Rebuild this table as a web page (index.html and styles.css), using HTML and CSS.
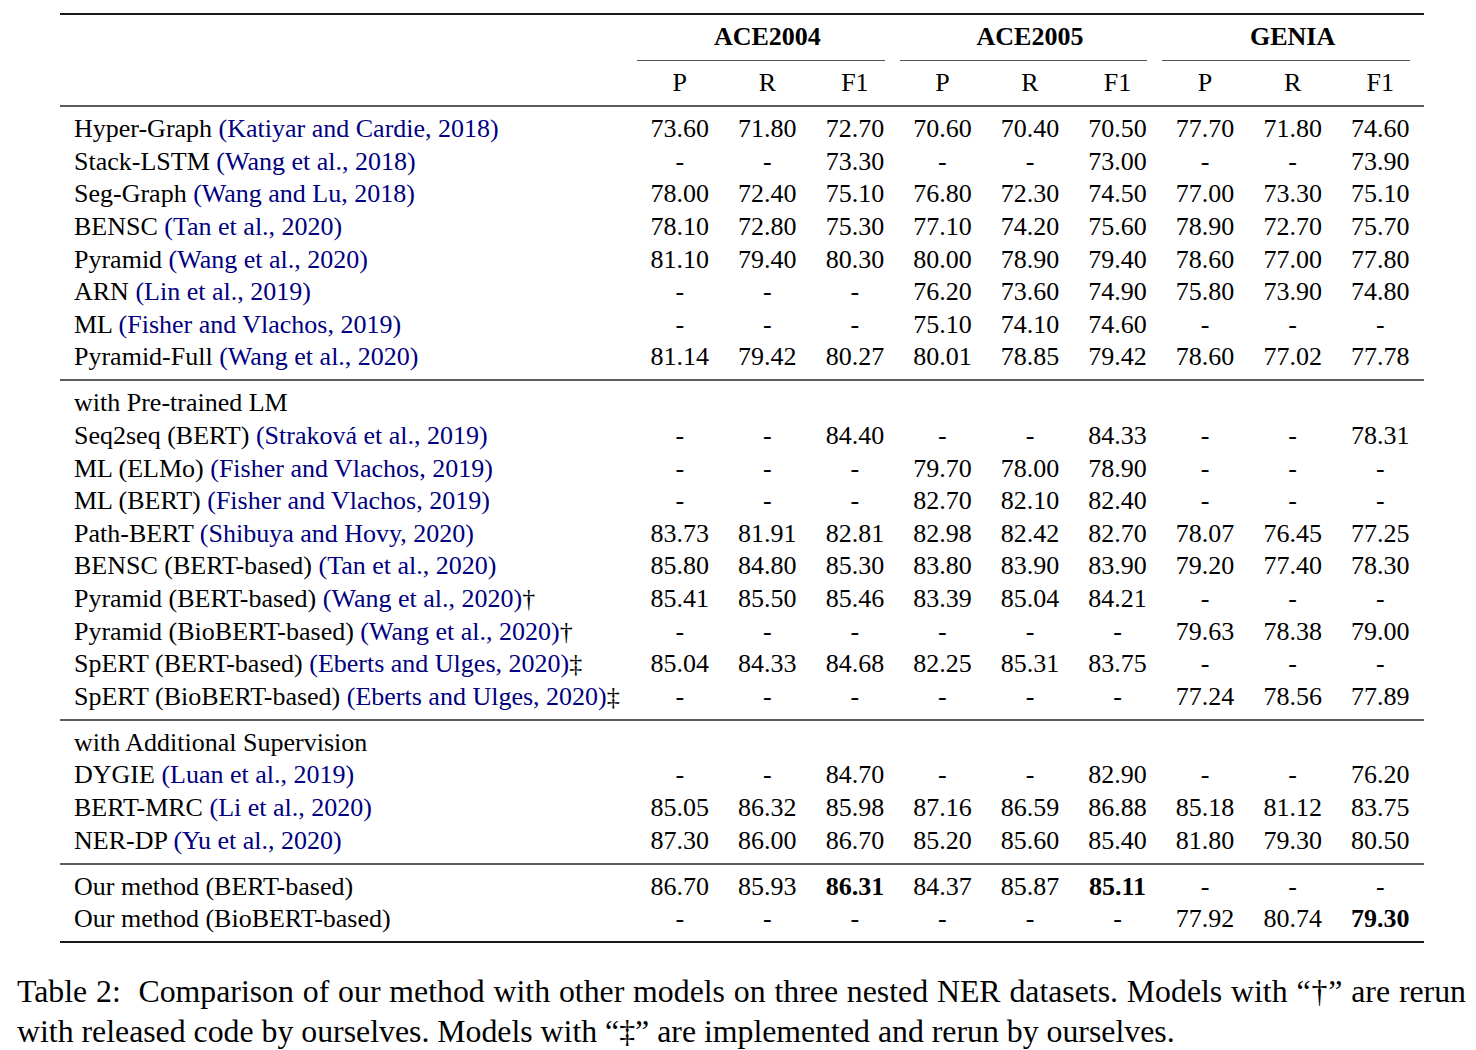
FILE: index.html
```html
<!DOCTYPE html>
<html lang="en">
<head>
<meta charset="utf-8">
<title>Table 2</title>
<link rel="stylesheet" href="styles.css">
</head>
<body>
<div class="page">
  <div class="tbl">
    <div class="head">
      <div class="row hrow1">
        <div class="lab"></div>
        <div class="grp"><span class="grp-t">ACE2004</span><span class="cmid"></span></div>
        <div class="grp"><span class="grp-t">ACE2005</span><span class="cmid"></span></div>
        <div class="grp"><span class="grp-t">GENIA</span><span class="cmid"></span></div>
      </div>
      <div class="row hrow2">
        <div class="lab"></div>
        <div class="c">P</div><div class="c">R</div><div class="c">F1</div>
        <div class="c">P</div><div class="c">R</div><div class="c">F1</div>
        <div class="c">P</div><div class="c">R</div><div class="c">F1</div>
      </div>
    </div>

    <div class="sec">
      <div class="row"><div class="lab">Hyper-Graph <span class="cite">(Katiyar and Cardie, 2018)</span></div>
        <div class="c">73.60</div><div class="c">71.80</div><div class="c">72.70</div><div class="c">70.60</div><div class="c">70.40</div><div class="c">70.50</div><div class="c">77.70</div><div class="c">71.80</div><div class="c">74.60</div></div>
      <div class="row"><div class="lab">Stack-LSTM <span class="cite">(Wang et al., 2018)</span></div>
        <div class="c">-</div><div class="c">-</div><div class="c">73.30</div><div class="c">-</div><div class="c">-</div><div class="c">73.00</div><div class="c">-</div><div class="c">-</div><div class="c">73.90</div></div>
      <div class="row"><div class="lab">Seg-Graph <span class="cite">(Wang and Lu, 2018)</span></div>
        <div class="c">78.00</div><div class="c">72.40</div><div class="c">75.10</div><div class="c">76.80</div><div class="c">72.30</div><div class="c">74.50</div><div class="c">77.00</div><div class="c">73.30</div><div class="c">75.10</div></div>
      <div class="row"><div class="lab">BENSC <span class="cite">(Tan et al., 2020)</span></div>
        <div class="c">78.10</div><div class="c">72.80</div><div class="c">75.30</div><div class="c">77.10</div><div class="c">74.20</div><div class="c">75.60</div><div class="c">78.90</div><div class="c">72.70</div><div class="c">75.70</div></div>
      <div class="row"><div class="lab">Pyramid <span class="cite">(Wang et al., 2020)</span></div>
        <div class="c">81.10</div><div class="c">79.40</div><div class="c">80.30</div><div class="c">80.00</div><div class="c">78.90</div><div class="c">79.40</div><div class="c">78.60</div><div class="c">77.00</div><div class="c">77.80</div></div>
      <div class="row"><div class="lab">ARN <span class="cite">(Lin et al., 2019)</span></div>
        <div class="c">-</div><div class="c">-</div><div class="c">-</div><div class="c">76.20</div><div class="c">73.60</div><div class="c">74.90</div><div class="c">75.80</div><div class="c">73.90</div><div class="c">74.80</div></div>
      <div class="row"><div class="lab">ML <span class="cite">(Fisher and Vlachos, 2019)</span></div>
        <div class="c">-</div><div class="c">-</div><div class="c">-</div><div class="c">75.10</div><div class="c">74.10</div><div class="c">74.60</div><div class="c">-</div><div class="c">-</div><div class="c">-</div></div>
      <div class="row"><div class="lab">Pyramid-Full <span class="cite">(Wang et al., 2020)</span></div>
        <div class="c">81.14</div><div class="c">79.42</div><div class="c">80.27</div><div class="c">80.01</div><div class="c">78.85</div><div class="c">79.42</div><div class="c">78.60</div><div class="c">77.02</div><div class="c">77.78</div></div>
    </div>

    <div class="sec">
      <div class="row"><div class="lab">with Pre-trained LM</div></div>
      <div class="row"><div class="lab">Seq2seq (BERT) <span class="cite">(Straková et al., 2019)</span></div>
        <div class="c">-</div><div class="c">-</div><div class="c">84.40</div><div class="c">-</div><div class="c">-</div><div class="c">84.33</div><div class="c">-</div><div class="c">-</div><div class="c">78.31</div></div>
      <div class="row"><div class="lab">ML (ELMo) <span class="cite">(Fisher and Vlachos, 2019)</span></div>
        <div class="c">-</div><div class="c">-</div><div class="c">-</div><div class="c">79.70</div><div class="c">78.00</div><div class="c">78.90</div><div class="c">-</div><div class="c">-</div><div class="c">-</div></div>
      <div class="row"><div class="lab">ML (BERT) <span class="cite">(Fisher and Vlachos, 2019)</span></div>
        <div class="c">-</div><div class="c">-</div><div class="c">-</div><div class="c">82.70</div><div class="c">82.10</div><div class="c">82.40</div><div class="c">-</div><div class="c">-</div><div class="c">-</div></div>
      <div class="row"><div class="lab">Path-BERT <span class="cite">(Shibuya and Hovy, 2020)</span></div>
        <div class="c">83.73</div><div class="c">81.91</div><div class="c">82.81</div><div class="c">82.98</div><div class="c">82.42</div><div class="c">82.70</div><div class="c">78.07</div><div class="c">76.45</div><div class="c">77.25</div></div>
      <div class="row"><div class="lab">BENSC (BERT-based) <span class="cite">(Tan et al., 2020)</span></div>
        <div class="c">85.80</div><div class="c">84.80</div><div class="c">85.30</div><div class="c">83.80</div><div class="c">83.90</div><div class="c">83.90</div><div class="c">79.20</div><div class="c">77.40</div><div class="c">78.30</div></div>
      <div class="row"><div class="lab">Pyramid (BERT-based) <span class="cite">(Wang et al., 2020)</span>†</div>
        <div class="c">85.41</div><div class="c">85.50</div><div class="c">85.46</div><div class="c">83.39</div><div class="c">85.04</div><div class="c">84.21</div><div class="c">-</div><div class="c">-</div><div class="c">-</div></div>
      <div class="row"><div class="lab">Pyramid (BioBERT-based) <span class="cite">(Wang et al., 2020)</span>†</div>
        <div class="c">-</div><div class="c">-</div><div class="c">-</div><div class="c">-</div><div class="c">-</div><div class="c">-</div><div class="c">79.63</div><div class="c">78.38</div><div class="c">79.00</div></div>
      <div class="row"><div class="lab">SpERT (BERT-based) <span class="cite">(Eberts and Ulges, 2020)</span>‡</div>
        <div class="c">85.04</div><div class="c">84.33</div><div class="c">84.68</div><div class="c">82.25</div><div class="c">85.31</div><div class="c">83.75</div><div class="c">-</div><div class="c">-</div><div class="c">-</div></div>
      <div class="row"><div class="lab">SpERT (BioBERT-based) <span class="cite">(Eberts and Ulges, 2020)</span>‡</div>
        <div class="c">-</div><div class="c">-</div><div class="c">-</div><div class="c">-</div><div class="c">-</div><div class="c">-</div><div class="c">77.24</div><div class="c">78.56</div><div class="c">77.89</div></div>
    </div>

    <div class="sec">
      <div class="row"><div class="lab">with Additional Supervision</div></div>
      <div class="row"><div class="lab">DYGIE <span class="cite">(Luan et al., 2019)</span></div>
        <div class="c">-</div><div class="c">-</div><div class="c">84.70</div><div class="c">-</div><div class="c">-</div><div class="c">82.90</div><div class="c">-</div><div class="c">-</div><div class="c">76.20</div></div>
      <div class="row"><div class="lab">BERT-MRC <span class="cite">(Li et al., 2020)</span></div>
        <div class="c">85.05</div><div class="c">86.32</div><div class="c">85.98</div><div class="c">87.16</div><div class="c">86.59</div><div class="c">86.88</div><div class="c">85.18</div><div class="c">81.12</div><div class="c">83.75</div></div>
      <div class="row"><div class="lab">NER-DP <span class="cite">(Yu et al., 2020)</span></div>
        <div class="c">87.30</div><div class="c">86.00</div><div class="c">86.70</div><div class="c">85.20</div><div class="c">85.60</div><div class="c">85.40</div><div class="c">81.80</div><div class="c">79.30</div><div class="c">80.50</div></div>
    </div>

    <div class="sec">
      <div class="row"><div class="lab">Our method (BERT-based)</div>
        <div class="c">86.70</div><div class="c">85.93</div><div class="c"><b>86.31</b></div><div class="c">84.37</div><div class="c">85.87</div><div class="c"><b>85.11</b></div><div class="c">-</div><div class="c">-</div><div class="c">-</div></div>
      <div class="row"><div class="lab">Our method (BioBERT-based)</div>
        <div class="c">-</div><div class="c">-</div><div class="c">-</div><div class="c">-</div><div class="c">-</div><div class="c">-</div><div class="c">77.92</div><div class="c">80.74</div><div class="c"><b>79.30</b></div></div>
    </div>
  </div>

  <div class="caption">
    <div class="cap-l1">Table 2:&nbsp; Comparison of our method with other models on three nested NER datasets. Models with “†” are rerun</div>
    <div class="cap-l2">with released code by ourselves. Models with “‡” are implemented and rerun by ourselves.</div>
  </div>
</div>
</body>
</html>
```

FILE: styles.css
```css
html, body {
  margin: 0;
  padding: 0;
  background: #ffffff;
}

body {
  font-family: "Liberation Serif", "Times New Roman", serif;
  color: #000000;
}

.page {
  width: 1476px;
  height: 1050px;
  overflow: hidden;
}

.tbl {
  margin: 13px 0 0 60px;
  width: 1364px;
  border-top: 2px solid #1a1a1a;
  border-bottom: 2px solid #1a1a1a;
  font-size: 26px;
}

.row {
  display: grid;
  grid-template-columns: 576px repeat(9, 1fr);
  height: 32.6px;
  line-height: 32.6px;
  white-space: nowrap;
}

.lab {
  padding-left: 14px;
}

.c {
  text-align: center;
}

.c b {
  font-weight: bold;
}

.hrow1 {
  height: auto;
  padding-top: 6px;
}

.grp {
  grid-column: span 3;
  display: flex;
  flex-direction: column;
}

.grp-t {
  text-align: center;
  font-weight: bold;
}

.cmid {
  height: 1px;
  background: #555555;
  margin: 6px 14px 0 1px;
}

.hrow2 {
  padding: 6px 0 6px;
  height: 32.6px;
  box-sizing: content-box;
}

.sec {
  border-top: 2px solid #5c5c5c;
  padding: 6px 0 5.5px;
}

.cite {
  color: #000080;
}

.caption {
  margin: 29px 0 0 17px;
  width: 1449px;
  font-size: 31.8px;
  line-height: 39.5px;
}

.cap-l1 {
  text-align: justify;
  text-align-last: justify;
  white-space: nowrap;
}

.cap-l2 {
  text-align: left;
}
```
